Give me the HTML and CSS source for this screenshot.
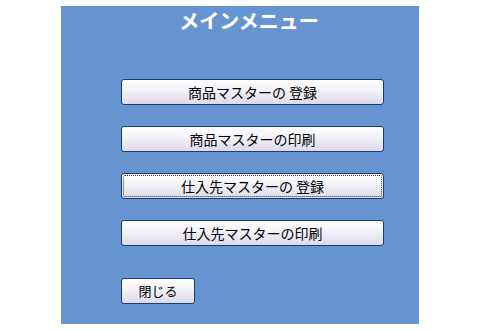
FILE: index.html
```html
<!DOCTYPE html>
<html lang="ja">
<head>
<meta charset="utf-8">
<title>メインメニュー</title>
<link rel="stylesheet" href="styles.css">
</head>
<body>
<div class="panel">
  <h1 class="title">メインメニュー</h1>
  <div class="menu">
    <button class="btn wide">商品マスターの 登録</button>
    <button class="btn wide">商品マスターの印刷</button>
    <button class="btn wide focus">仕入先マスターの 登録</button>
    <button class="btn wide">仕入先マスターの印刷</button>
    <button class="btn close">閉じる</button>
  </div>
</div>
</body>
</html>
```
FILE: styles.css
```css
html, body {
  margin: 0;
  padding: 0;
  background: #ffffff;
}
body {
  padding: 6px 0 0 61px;
  font-family: "Noto Sans CJK JP", "DejaVu Sans", sans-serif;
}
.panel {
  width: 358px;
  height: 318px;
  background: #6694d0;
  box-sizing: border-box;
  padding-top: 3px;
}
.title {
  margin: 0;
  padding-left: 18px;
  text-align: center;
  color: #ffffff;
  font-size: 20px;
  font-weight: bold;
  line-height: 24px;
  text-shadow: 0 0 1px rgba(220, 220, 230, 0.6);
}
.menu {
  display: flex;
  flex-direction: column;
  align-items: flex-start;
  gap: 21px;
  margin: 46px 0 0 60px;
}
.btn {
  height: 26px;
  box-sizing: border-box;
  border: 1px solid #1f3c72;
  border-radius: 3px;
  background: linear-gradient(to bottom, #ffffff 0%, #f4f3f9 40%, #dcdaea 100%);
  font-family: "Noto Sans CJK JP", "DejaVu Sans", sans-serif;
  font-size: 14px;
  color: #000000;
  padding: 0;
  line-height: 22px;
  position: relative;
}
.wide {
  width: 263px;
}
.close {
  width: 74px;
  margin-top: 11px;
  font-size: 13px;
}
.focus::after {
  content: "";
  position: absolute;
  inset: 1px;
  border: 1px dotted #333333;
  border-radius: 2px;
}
```
